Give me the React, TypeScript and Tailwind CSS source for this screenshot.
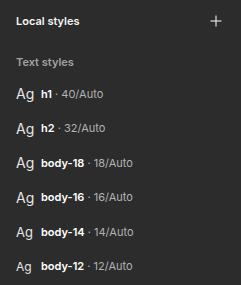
import React from "react";

const rows = [
  { name: "h1", meta: "40/Auto", ag: "text-[14px]" },
  { name: "h2", meta: "32/Auto", ag: "text-[14px]" },
  { name: "body-18", meta: "18/Auto", ag: "text-[14px]" },
  { name: "body-16", meta: "16/Auto", ag: "text-[14px]" },
  { name: "body-14", meta: "14/Auto", ag: "text-[13px]" },
  { name: "body-12", meta: "12/Auto", ag: "text-[12px]" },
];

export default function App() {
  return (
    <div
      className="w-[241px] h-[285px] bg-[#2c2c2c] overflow-hidden text-white"
      style={{ fontFamily: "Inter, 'Noto Sans', sans-serif" }}
    >
      <div className="flex items-center justify-between pl-4 pr-[19px] h-[42px]">
        <span className="text-[11px] font-semibold text-[#f5f5f5]">Local styles</span>
        <svg width="12" height="12" viewBox="0 0 12 12" className="text-white">
          <path d="M6 0.5V11.5M0.5 6H11.5" stroke="currentColor" strokeWidth="1" />
        </svg>
      </div>
      <div className="pl-4 h-[40px] flex items-center">
        <span className="text-[11px] font-semibold text-[#a3a3a3]">Text styles</span>
      </div>
      <div className="flex flex-col -mt-[5px]">
        {rows.map((r) => (
          <div key={r.name} className="flex items-center h-[34.5px] pl-4">
            <span className={`w-[25px] ${r.ag} text-[#e6e6e6] leading-none`}>Ag</span>
            <span className="text-[11px] leading-none">
              <span className="font-semibold text-white">{r.name}</span>
              <span className="text-[#b3b3b3]"> · {r.meta}</span>
            </span>
          </div>
        ))}
      </div>
    </div>
  );
}
